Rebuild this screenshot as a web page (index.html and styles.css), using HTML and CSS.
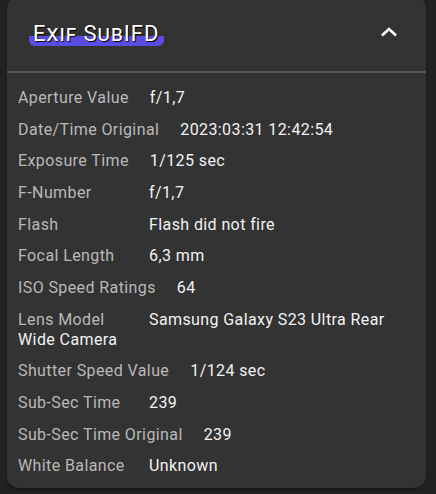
FILE: index.html
```html
<!DOCTYPE html>
<html>
<head>
<meta charset="utf-8">
<link rel="stylesheet" href="styles.css">
</head>
<body>
<section class="card">
  <header class="card-head">
    <h2 class="title"><span class="title-text">Exif SubIFD</span></h2>
    <svg class="chevron" width="18" height="12" viewBox="0 0 18 12"><path d="M2 9.5 L9 3 L16 9.5" fill="none" stroke="#ffffff" stroke-width="2.6" stroke-linecap="butt" stroke-linejoin="miter"/></svg>
  </header>
  <div class="rows">
    <div class="row"><span class="label">Aperture Value</span><span class="value">f/1,7</span></div>
    <div class="row"><span class="label">Date/Time Original</span><span class="value">2023:03:31 12:42:54</span></div>
    <div class="row"><span class="label">Exposure Time</span><span class="value">1/125 sec</span></div>
    <div class="row"><span class="label">F-Number</span><span class="value">f/1,7</span></div>
    <div class="row"><span class="label">Flash</span><span class="value">Flash did not fire</span></div>
    <div class="row"><span class="label">Focal Length</span><span class="value">6,3 mm</span></div>
    <div class="row"><span class="label">ISO Speed Ratings</span><span class="value">64</span></div>
    <div class="row"><span class="label">Lens Model</span><span class="value">Samsung Galaxy S23 Ultra Rear Wide Camera</span></div>
    <div class="row"><span class="label">Shutter Speed Value</span><span class="value">1/124 sec</span></div>
    <div class="row"><span class="label">Sub-Sec Time</span><span class="value">239</span></div>
    <div class="row"><span class="label">Sub-Sec Time Original</span><span class="value">239</span></div>
    <div class="row"><span class="label">White Balance</span><span class="value">Unknown</span></div>
  </div>
</section>
</body>
</html>
```
FILE: styles.css
```css
html, body {
  margin: 0;
  padding: 0;
  background: #222222;
  height: 100%;
}
body {
  padding: 0 10px 0 7px;
  overflow: hidden;
  font-family: Roboto, "Noto Sans", sans-serif;
}
.card {
  margin-top: -4px;
  background: #333333;
  border-radius: 12px;
  padding-bottom: 6px;
  box-shadow: 0 1px 3px rgba(0,0,0,0.5);
}
.card-head {
  height: 77px;
  box-sizing: border-box;
  border-bottom: 2px solid #555555;
  display: flex;
  align-items: center;
  justify-content: space-between;
  padding: 0 28px 0 22px;
}
.title {
  margin: 0;
  font-weight: 400;
  font-size: 22px;
  line-height: 24px;
  font-variant: small-caps;
  letter-spacing: 1px;
  color: #ffffff;
  text-shadow: 1px 1px 1px #000000;
}
.title-text {
  padding: 0 5px 0 4px;
  background: linear-gradient(to bottom, transparent 0, transparent 15px, #5a4de4 15px, #5a4de4 25px, transparent 25px);
  border-radius: 6px;
}
.chevron {
  display: block;
  margin-top: -3px;
}
.rows {
  padding: 9px 11px 0 11px;
}
.row {
  font-size: 16px;
  letter-spacing: 0.4px;
  line-height: 20px;
  padding: 5.85px 0;
  color: #f2f2f2;
}
.label {
  display: inline-block;
  min-width: 110px;
  margin-right: 21px;
  color: #b9b9b9;
}
```
